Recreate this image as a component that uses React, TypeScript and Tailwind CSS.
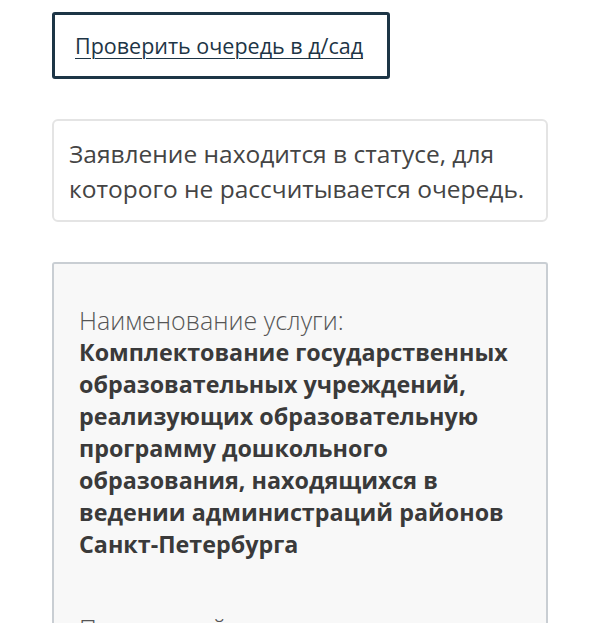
import React from 'react';

const App: React.FC = () => {
  return (
    <div className="min-h-screen bg-white px-[52px] pt-[12px] font-['Open_Sans','Noto_Sans',sans-serif]">
      {/* Queue check button */}
      <button className="flex h-[67px] w-[338px] items-center rounded-[3px] border-[3px] border-[#1d3546] bg-white pl-[20px] text-left">
        <span className="text-[21.5px] leading-none text-[#1d3546] underline decoration-1 underline-offset-[4px]">
          Проверить очередь в д/сад
        </span>
      </button>

      {/* Status notice */}
      <div className="mt-[40px] rounded-[6px] border-2 border-[#e4e4e4] bg-white px-[15px] pt-[15px] pb-[14px]">
        <p className="text-[24.5px] leading-[35px] text-[#444444]">
          Заявление находится в статусе, для которого не рассчитывается очередь.
        </p>
      </div>

      {/* Service info */}
      <div className="mt-[40px] rounded-t-[3px] border-2 border-b-0 border-[#c9ced3] bg-[#f8f8f8] px-[25px] pt-[40px] pb-[40px]">
        <p className="text-[25px] font-light leading-[32px] text-[#555555]">Наименование услуги:</p>
        <p className="text-[23.3px] font-bold leading-[32px] text-[#3a3a3a]">
          Комплектование государственных образовательных учреждений, реализующих образовательную программу дошкольного образования, находящихся в ведении администраций районов Санкт-Петербурга
        </p>
        <p className="mt-[52px] text-[25px] font-light leading-[32px] text-[#555555]">Порядковый номер:</p>
      </div>
    </div>
  );
};

export default App;
